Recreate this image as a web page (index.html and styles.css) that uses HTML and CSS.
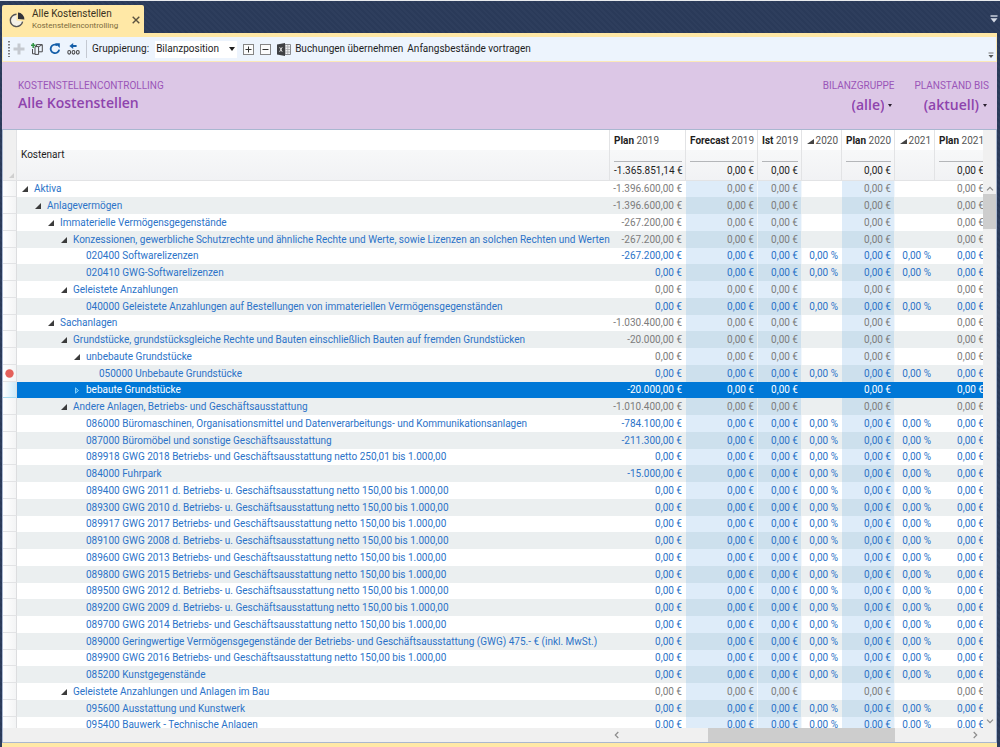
FILE: index.html
```html
<!DOCTYPE html>
<html lang="de">
<head>
<meta charset="utf-8">
<meta name="viewport" content="width=device-width, initial-scale=1">
<title>Alle Kostenstellen – Kostenstellencontrolling</title>
<link rel="stylesheet" href="styles.css">
</head>
<body>
<div class="window">
  <header class="tabstrip">
    <div class="tab">
      <svg class="tab-icon" viewBox="0 0 16 16" width="16" height="16" aria-hidden="true">
        <path d="M7.5 2.2A6.2 6.2 0 1 0 13.8 9.2L7.5 8.5z" fill="#f4f1e8" stroke="none"/>
        <path d="M7.5 2.2A6.2 6.2 0 1 0 13.6 9.6" fill="none" stroke="#555" stroke-width="1.4"/>
        <path d="M9 .6A6.6 6.6 0 0 1 15.4 7.4L9 7z" fill="#33343a"/>
      </svg>
      <div class="tab-text">
        <div class="tab-title">Alle Kostenstellen</div>
        <div class="tab-sub">Kostenstellencontrolling</div>
      </div>
      <button class="icon-btn tab-close" aria-label="Schließen">
        <svg viewBox="0 0 8 8" width="8" height="8"><path d="M.7.7l6.6 6.6M7.3.7L.7 7.3" stroke="#5b5340" stroke-width="1.4"/></svg>
      </button>
    </div>
    <button class="icon-btn strip-menu" aria-label="Fenster">
      <svg viewBox="0 0 8 8" width="8" height="8"><path d="M.5 1h7" stroke="#d5dbe6" stroke-width="1.4"/><path d="M.5 3.2h7L4 7.4z" fill="#d5dbe6"/></svg>
    </button>
  </header>

  <main class="document">
    <div class="toolbar" role="toolbar" aria-label="Werkzeuge">
      <svg class="grip" viewBox="0 0 2 16" width="2" height="16" aria-hidden="true"><path d="M1 0v16" stroke="#7e7f83" stroke-width="2" stroke-dasharray="1.5 1.5"/></svg>
      <button class="icon-btn" aria-label="Neu" disabled>
        <svg viewBox="0 0 12 12" width="12" height="12"><path d="M6 .5v11M.5 6h11" stroke="#c5c9d0" stroke-width="3"/></svg>
      </button>
      <button class="icon-btn" aria-label="Kopieren">
        <svg viewBox="0 0 12 12" width="12" height="12"><path d="M2.2 0v5M0 2.3h4.6" stroke="#2f9343" stroke-width="1.5"/><path d="M1.5 6v4.8h2.6M4 3.6h3.6v7.8H4zM5.5 3.5V1.6h5.8v7.2H7.8M7.6 3.8l3.4-2" fill="none" stroke="#4b4b4d"/></svg>
      </button>
      <button class="icon-btn" aria-label="Aktualisieren">
        <svg viewBox="0 0 12 12" width="12" height="12"><path d="M8.2 2.2A4.3 4.3 0 1 0 10.2 6.6" fill="none" stroke="#145ea8" stroke-width="1.8"/><path d="M6 .2h4.8v4.9z" fill="#145ea8"/></svg>
      </button>
      <button class="icon-btn" aria-label="Zurück">
        <svg viewBox="0 0 13 12" width="13" height="12"><path d="M4 3h5.6" stroke="#145ea8" stroke-width="2"/><path d="M2.4 3L6.2 0v6z" fill="#145ea8"/><g fill="none" stroke="#4b4b4d" stroke-width="1.1"><ellipse cx="2.2" cy="9.3" rx="1.4" ry="1.8"/><ellipse cx="6.5" cy="9.3" rx="1.4" ry="1.8"/><ellipse cx="10.8" cy="9.3" rx="1.4" ry="1.8"/></g></svg>
      </button>
      <span class="divider"></span>
      <label for="grouping">Gruppierung:</label>
      <span class="combo">
        <select id="grouping"><option>Bilanzposition</option></select>
        <svg viewBox="0 0 6 4" width="6" height="4" aria-hidden="true"><path d="M0 0h6L3 4z" fill="#1e1e1e"/></svg>
      </span>
      <button class="icon-btn" aria-label="Alle aufklappen">
        <svg viewBox="0 0 11 11" width="11" height="11"><rect x=".5" y=".5" width="10" height="10" fill="#fbfbfb" stroke="#858585"/><path d="M5.5 2.5v6M2.5 5.5h6" stroke="#333"/></svg>
      </button>
      <button class="icon-btn" aria-label="Alle zuklappen">
        <svg viewBox="0 0 11 11" width="11" height="11"><rect x=".5" y=".5" width="10" height="10" fill="#fbfbfb" stroke="#858585"/><path d="M2.5 5.5h6" stroke="#333"/></svg>
      </button>
      <button class="icon-btn" aria-label="Excel-Export">
        <svg viewBox="0 0 14 13" width="14" height="13"><path d="M8 1.5h5.5v10H8z" fill="#f2f3f5" stroke="#8b8c90"/><path d="M8 4h5M8 6.5h5M8 9h5M10.8 2v9" stroke="#a5a6aa" stroke-width=".8"/><path d="M0 1.4L8 0v13L0 11.6z" fill="#3f4043"/><path d="M2.6 4.2l2.6 4.6M5.2 4.2L2.6 8.8" stroke="#ddd" stroke-width="1"/></svg>
      </button>
      <button class="text-btn">Buchungen übernehmen</button>
      <button class="text-btn">Anfangsbestände vortragen</button>
      <button class="icon-btn overflow" aria-label="Weitere Optionen">
        <svg viewBox="0 0 6 6" width="6" height="6"><path d="M.5 1h5" stroke="#777"/><path d="M.5 3h5L3 6z" fill="#555"/></svg>
      </button>
    </div>

    <section class="banner">
      <div>
        <div class="caption">KOSTENSTELLENCONTROLLING</div>
        <h1>Alle Kostenstellen</h1>
      </div>
      <div class="filters">
        <div class="filter">
          <label class="caption" for="group">BILANZGRUPPE</label>
          <span class="filter-value"><select id="group"><option>(alle)</option></select><svg viewBox="0 0 4 3" width="4" height="3" aria-hidden="true"><path d="M0 0h4L2 3z" fill="#2a2030"/></svg></span>
        </div>
        <div class="filter">
          <label class="caption" for="state">PLANSTAND BIS</label>
          <span class="filter-value"><select id="state"><option>(aktuell)</option></select><svg viewBox="0 0 4 3" width="4" height="3" aria-hidden="true"><path d="M0 0h4L2 3z" fill="#2a2030"/></svg></span>
        </div>
      </div>
    </section>

    <section class="grid-area">
      <div class="viewport">
        <table class="costs">
          <colgroup>
            <col class="c-gutter"><col><col class="c-plan"><col class="c-forecast"><col class="c-actual"><col class="c-pct"><col class="c-year"><col class="c-pct"><col class="c-year">
          </colgroup>
          <thead>
            <tr>
              <th class="gutter"><svg viewBox="0 0 5 5" width="5" height="5" aria-hidden="true"><path d="M5 0v5H0z" fill="#cfcfcf"/></svg></th>
              <th class="name" scope="col">Kostenart</th>
              <th scope="col"><div class="col-title"><b>Plan</b> 2019</div><div class="sum">-1.365.851,14 €</div></th>
              <th scope="col"><div class="col-title"><b>Forecast</b> 2019</div><div class="sum">0,00 €</div></th>
              <th scope="col"><div class="col-title"><b>Ist</b> 2019</div><div class="sum">0,00 €</div></th>
              <th scope="col"><div class="col-title trend"><svg viewBox="0 0 7 5" width="7" height="5" aria-hidden="true"><path d="M7 0v5H0z" fill="#444"/></svg>2020</div></th>
              <th scope="col"><div class="col-title"><b>Plan</b> 2020</div><div class="sum">0,00 €</div></th>
              <th scope="col"><div class="col-title trend"><svg viewBox="0 0 7 5" width="7" height="5" aria-hidden="true"><path d="M7 0v5H0z" fill="#444"/></svg>2021</div></th>
              <th scope="col"><div class="col-title"><b>Plan</b> 2021</div><div class="sum">0,00 €</div></th>
            </tr>
          </thead>
          <tbody id="rows"></tbody>
        </table>
      </div>
      <div class="vscroll" aria-hidden="true">
        <svg viewBox="0 0 8 5" width="8" height="5"><path d="M1 4.3l3-3 3 3" fill="none" stroke="#8c8c8c" stroke-width="1.2"/></svg>
        <span class="vtrack"><span class="vthumb"></span></span>
        <svg viewBox="0 0 8 5" width="8" height="5"><path d="M1 .7l3 3 3-3" fill="none" stroke="#8c8c8c" stroke-width="1.2"/></svg>
      </div>
    </section>
    <div class="hscroll" aria-hidden="true">
      <svg viewBox="0 0 5 8" width="5" height="8"><path d="M4.3 1l-3 3 3 3" fill="none" stroke="#8c8c8c" stroke-width="1.2"/></svg>
      <span class="htrack"><span class="hthumb"></span></span>
      <svg viewBox="0 0 5 8" width="5" height="8"><path d="M.7 1l3 3-3 3" fill="none" stroke="#8c8c8c" stroke-width="1.2"/></svg>
    </div>
  </main>
</div>
<script src="rows.js"></script>
</body>
</html>
```

FILE: styles.css
```css
* { box-sizing: border-box; }

body {
  margin: 0;
  font: 10px/16px Roboto, "Open Sans", sans-serif;
  color: #1e1e1e;
}

button, select {
  margin: 0;
  padding: 0;
  border: 0;
  background: none;
  color: inherit;
  font: inherit;
}

select { appearance: none; }
svg { display: block; flex: none; }

.window {
  display: flex;
  flex-direction: column;
  height: 100vh;
  padding: 0 2px 0 2px;
  border-top: 1px solid #e9ebee;
  background: repeating-linear-gradient(45deg, #2a3a59 0 2px, #2e3e5d 2px 4px);
}

.icon-btn { display: flex; align-items: center; justify-content: center; flex: none; }

/* Tab strip */
.tabstrip {
  display: flex;
  align-items: flex-end;
  justify-content: space-between;
  flex: none;
  height: 32px;
}
.tab {
  display: flex;
  align-items: center;
  width: 142px;
  height: 28px;
  padding: 2px 4px 0 7px;
  border-radius: 2px 2px 0 0;
  background: #ffe8a6;
}
.tab-text { flex: 1; padding-left: 7px; white-space: nowrap; }
.tab-title { font-size: 10px; line-height: 12px; color: #3a3222; }
.tab-sub { font-size: 8px; line-height: 12px; color: #7b6a3c; }
.strip-menu { align-self: center; padding-top: 4px; }

/* Document frame */
.document {
  display: flex;
  flex-direction: column;
  flex: 1;
  min-height: 0;
  margin-right: 1px;
  border-top: 4px solid #ffe8a6;
  border-bottom: 4px solid #ffe8a6;
}

.toolbar {
  display: flex;
  align-items: center;
  gap: 6px;
  flex: none;
  height: 25px;
  padding: 0 2px 0 5px;
  border: 1px solid #fbe9b8;
  border-top: 0;
  background: #edf4fd;
  white-space: nowrap;
}
.grip { margin-right: -3px; }
.divider { width: 1px; height: 18px; margin-right: -1px; background: #c4c9d2; }
.combo {
  display: flex;
  align-items: center;
  justify-content: space-between;
  width: 82px;
  height: 17px;
  padding: 0 2px 0 1px;
  background: #fff;
}
.text-btn { margin-left: -2px; }
.overflow { align-self: flex-end; margin: 0 0 3px auto; }

/* Banner */
.banner {
  display: flex;
  justify-content: space-between;
  flex: none;
  height: 67px;
  padding: 16px 8px 0 16px;
  background: #dcc7e6;
  color: #8e44ad;
}
.banner h1 { margin: 0; font: 600 14px/18px "Open Sans", sans-serif; }
.caption { font-size: 10px; line-height: 16px; color: #9a55b8; }
.filters { display: flex; gap: 20px; }
.filter { display: flex; flex-direction: column; align-items: flex-end; }
.filter-value { display: flex; align-items: center; gap: 4px; padding: 1px 2px 0 0; }
.filter-value select { field-sizing: content; font: 600 14px/20px "Open Sans", sans-serif; }

/* Data grid */
.grid-area {
  display: flex;
  flex: 1;
  min-height: 0;
  border: 1px solid #a9b7d0;
  border-width: 1px 1px 0;
  background: #f0f0f0;
}
.viewport { flex: 1; min-width: 0; overflow: hidden; background: #fff; }

.costs {
  width: calc(100% + 5px);
  table-layout: fixed;
  border-collapse: separate;
  border-spacing: 0;
}
.c-gutter { width: 14px; }
.c-plan { width: 76px; }
.c-forecast { width: 72px; }
.c-actual { width: 44px; }
.c-pct { width: 40px; }
.c-year { width: 53px; }

.costs th, .costs td { padding: 0; white-space: nowrap; overflow: hidden; }

.costs th {
  height: 50px;
  border-right: 1px solid #e2e3e5;
  border-bottom: 1px solid #e2e3e5;
  background: linear-gradient(#fff 20px, #f7f8f9 20px, #f1f2f4);
  font-weight: 400;
  text-align: right;
  vertical-align: top;
}
.costs th.name { padding: 0 4px; text-align: left; vertical-align: middle; }
.costs th.gutter { padding: 0 2px 2px 0; background: #f0f0f0; vertical-align: bottom; }
.costs th.gutter svg { margin-left: auto; }
.costs th:nth-child(n+3) { padding: 3px 3px 0 4px; }
.col-title { color: #555; text-align: left; }
.col-title b { color: #1e1e1e; font-weight: 700; }
.trend { display: flex; align-items: center; justify-content: flex-end; gap: 2px; }
.sum { margin-top: 12px; border-top: 1px solid #b4b6b9; line-height: 18px; }

.costs td { height: 17px; line-height: 16px; text-align: right; }
.costs tr:nth-child(4n+1) td { height: 16px; }
.costs tbody tr:nth-child(even) { background: #ebeff0; }

.costs td.gutter {
  border-right: 1px solid #dcdddf;
  border-bottom: 1px solid #e2e3e5;
  background: linear-gradient(90deg, #fff, #f3f4f5);
}
.costs td.gutter svg { margin: 0 auto; }
.name-cell { display: flex; align-items: center; gap: 6px; }
.name-cell a { color: #2b73c8; text-decoration: none; }
.level-0 { padding-left: 5px; }
.level-1 { padding-left: 18px; }
.level-2 { padding-left: 31px; }
.level-3 { padding-left: 44px; }
.level-4 { padding-left: 57px; }
.level-5 { padding-left: 70px; }
.leaf { padding-left: 12px; }

.costs td.num { padding-right: 4px; color: #2b73c8; }
.costs .group td.num { color: #7c7c7c; }
.costs td.tint {
  padding-right: 3px;
  border-right: 1px solid #f2f7fb;
  background: #deecf9;
}
.costs tr:nth-child(even) td.tint { border-right-color: #ebeff0; background: #cde0ed; }

.costs tbody tr.selected,
.costs tbody tr.selected td.tint { border-color: #0078d7; background: #0078d7; }
.costs .selected td.num, .selected .name-cell a { color: #fff; }
.costs .selected td.gutter { background: linear-gradient(90deg, #fff, #cdeaf8); border-bottom-color: #a5dcf2; }

/* Scroll bars */
.vscroll {
  display: flex;
  flex-direction: column;
  align-items: center;
  gap: 3px;
  width: 13px;
  padding: 56px 0 4px;
}
.vtrack { flex: 1; width: 100%; }
.vthumb { display: block; height: 35px; background: #cdcdcd; }
.hscroll {
  display: flex;
  align-items: center;
  flex: none;
  height: 15px;
  padding: 0 18px 0 611px;
  border: 1px solid #a9b7d0;
  border-top: 0;
  background: #f0f0f0;
}
.htrack { flex: 1; height: 100%; padding: 0 78px 0 89px; }
.hthumb { display: block; height: 100%; background: #cdcdcd; }
```

FILE: rows.js
```js
// [level, kind, label, plan 2019]; kind: g = open group, c = closed group, a = account
const rows = [
  [0, "g", "Aktiva", "-1.396.600,00"],
  [1, "g", "Anlagevermögen", "-1.396.600,00"],
  [2, "g", "Immaterielle Vermögensgegenstände", "-267.200,00"],
  [3, "g", "Konzessionen, gewerbliche Schutzrechte und ähnliche Rechte und Werte, sowie Lizenzen an solchen Rechten und Werten", "-267.200,00"],
  [4, "a", "020400 Softwarelizenzen", "-267.200,00"],
  [4, "a", "020410 GWG-Softwarelizenzen", "0,00"],
  [3, "g", "Geleistete Anzahlungen", "0,00"],
  [4, "a", "040000 Geleistete Anzahlungen auf Bestellungen von immateriellen Vermögensgegenständen", "0,00"],
  [2, "g", "Sachanlagen", "-1.030.400,00"],
  [3, "g", "Grundstücke, grundstücksgleiche Rechte und Bauten einschließlich Bauten auf fremden Grundstücken", "-20.000,00"],
  [4, "g", "unbebaute Grundstücke", "0,00"],
  [5, "a", "050000 Unbebaute Grundstücke", "0,00", "marked"],
  [4, "c", "bebaute Grundstücke", "-20.000,00", "selected"],
  [3, "g", "Andere Anlagen, Betriebs- und Geschäftsausstattung", "-1.010.400,00"],
  [4, "a", "086000 Büromaschinen, Organisationsmittel und Datenverarbeitungs- und Kommunikationsanlagen", "-784.100,00"],
  [4, "a", "087000 Büromöbel und sonstige Geschäftsausstattung", "-211.300,00"],
  [4, "a", "089918 GWG 2018 Betriebs- und Geschäftsausstattung netto 250,01 bis 1.000,00", "0,00"],
  [4, "a", "084000 Fuhrpark", "-15.000,00"],
  [4, "a", "089400 GWG 2011 d. Betriebs- u. Geschäftsausstattung netto 150,00 bis 1.000,00", "0,00"],
  [4, "a", "089300 GWG 2010 d. Betriebs- u. Geschäftsausstattung netto 150,00 bis 1.000,00", "0,00"],
  [4, "a", "089917 GWG 2017 Betriebs- und Geschäftsausstattung netto 150,00 bis 1.000,00", "0,00"],
  [4, "a", "089100 GWG 2008 d. Betriebs- u. Geschäftsausstattung netto 150,00 bis 1.000,00", "0,00"],
  [4, "a", "089600 GWG 2013 Betriebs- und Geschäftsausstattung netto 150,00 bis 1.000,00", "0,00"],
  [4, "a", "089800 GWG 2015 Betriebs- und Geschäftsausstattung netto 150,00 bis 1.000,00", "0,00"],
  [4, "a", "089500 GWG 2012 d. Betriebs- u. Geschäftsausstattung netto 150,00 bis 1.000,00", "0,00"],
  [4, "a", "089200 GWG 2009 d. Betriebs- u. Geschäftsausstattung netto 150,00 bis 1.000,00", "0,00"],
  [4, "a", "089700 GWG 2014 Betriebs- und Geschäftsausstattung netto 150,00 bis 1.000,00", "0,00"],
  [4, "a", "089000 Geringwertige Vermögensgegenstände der Betriebs- und Geschäftsausstattung (GWG) 475.- € (inkl. MwSt.)", "0,00"],
  [4, "a", "089900 GWG 2016 Betriebs- und Geschäftsausstattung netto 150,00 bis 1.000,00", "0,00"],
  [4, "a", "085200 Kunstgegenstände", "0,00"],
  [3, "g", "Geleistete Anzahlungen und Anlagen im Bau", "0,00"],
  [4, "a", "095600 Ausstattung und Kunstwerk", "0,00"],
  [4, "a", "095400 Bauwerk - Technische Anlagen", "0,00"]
];

const toggles = {
  g: '<button class="icon-btn" aria-label="Zuklappen"><svg viewBox="0 0 6 6" width="6" height="6"><path d="M6 0v6H0z" fill="#3c3c3c"/></svg></button>',
  c: '<button class="icon-btn" aria-label="Aufklappen"><svg viewBox="0 0 6 7" width="6" height="7"><path d="M1.5 .8v5.4l3-2.7z" fill="#1c97ea" stroke="#8fd6ff" stroke-width=".9"/></svg></button>',
  a: ""
};
const marker = '<svg viewBox="0 0 9 9" width="9" height="9"><circle cx="4.5" cy="4.5" r="4.2" fill="#e4605a"/></svg>';

document.getElementById("rows").innerHTML = rows.map(([level, kind, label, plan, state = ""]) => {
  const account = kind === "a";
  const pct = account ? "0,00 %" : "";
  return `<tr class="${account ? "account" : "group"} ${state}">
    <td class="gutter">${state === "marked" ? marker : ""}</td>
    <td><div class="name-cell level-${level}">${toggles[kind]}<a href="#"${account ? ' class="leaf"' : ""}>${label}</a></div></td>
    <td class="num">${plan} €</td>
    <td class="num tint">0,00 €</td>
    <td class="num tint">0,00 €</td>
    <td class="num">${pct}</td>
    <td class="num tint">0,00 €</td>
    <td class="num">${pct}</td>
    <td class="num">0,00 €</td>
  </tr>`;
}).join("");
```
